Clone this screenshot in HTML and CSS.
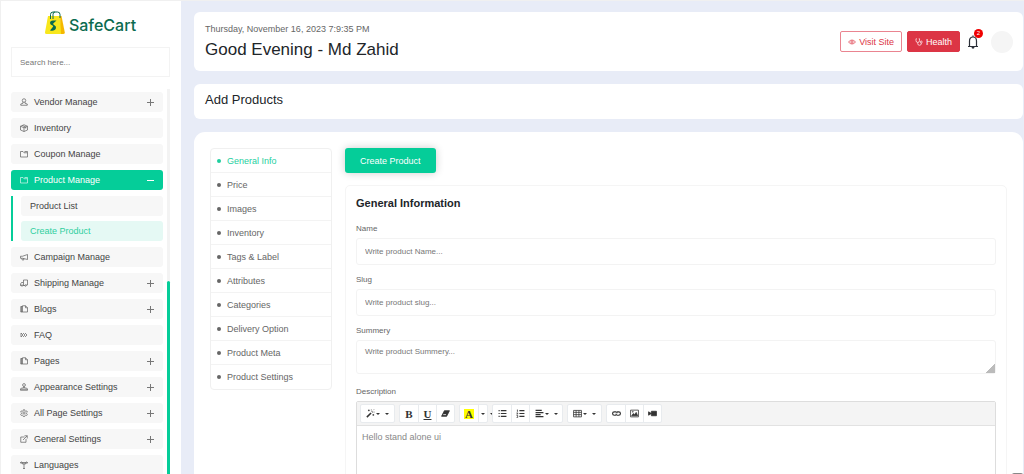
FILE: index.html
```html
<!DOCTYPE html>
<html lang="en">
<head>
  <meta charset="UTF-8">
  <meta name="viewport" content="width=device-width, initial-scale=1.0">
  <title>Add Products - SafeCart</title>
  <link rel="stylesheet" href="styles.css">
</head>
<body>

  <!-- icon set -->
  <svg class="sprite" aria-hidden="true">
    <symbol id="i-user" viewBox="0 0 16 16"><circle cx="8" cy="5" r="3.5"/><path d="M6 8v2.500L1.500 12v2.500h13V12L10 10.500V8"/></symbol>
    <symbol id="i-box" viewBox="0 0 16 16"><path d="M1 4.500 8 1.500l7 3v7.500l-7 3-7-3zM1 4.500l7 3 7-3M8 7.500V15M4.500 3l7 3v3"/></symbol>
    <symbol id="i-folder" viewBox="0 0 16 16"><path d="M1 3h5l2 2.500h7V14H1zM9 3h6v2.500"/></symbol>
    <symbol id="i-horn" viewBox="0 0 16 16"><path d="M1 6.500h4L15 3v10L5 10.500H1zM3.500 10.500l1 3.500h3v-3"/></symbol>
    <symbol id="i-ship" viewBox="0 0 16 16"><path d="M7 2h8v10h-3M7 2v5H3l-2 3v3h2M7 7v6M5.500 13H10"/><circle cx="4" cy="13" r="1.500"/><circle cx="11" cy="13" r="1.500"/></symbol>
    <symbol id="i-copy" viewBox="0 0 16 16"><path d="M5 1.500h6l4 4V14H5zM11 1.500v4h4M5 3H1.500v11H5M3 3v11"/></symbol>
    <symbol id="i-faq" viewBox="0 0 16 16"><path d="m2 4 4 4-4 4M6 4l4 4-4 4M10 4l4 4-4 4M2 4v8"/></symbol>
    <symbol id="i-stamp" viewBox="0 0 16 16"><circle cx="8" cy="4" r="2.800"/><path d="M7 7v3H3l-2 2v2.500h14V12l-2-2H9V7M1.500 12.500h13"/></symbol>
    <symbol id="i-cog" viewBox="0 0 16 16"><circle cx="8" cy="8" r="2.300"/><path d="m6.700 1.500-.4 2-1.700 1-2-.7-1.300 2.400 1.500 1.400v1.800L1.300 10.800l1.300 2.100 2-.6 1.700 1 .4 1.700h2.600l.4-1.700 1.700-1 2 .6 1.300-2.100-1.500-1.400V7.600l1.500-1.400-1.300-2.400-2 .7-1.700-1-.4-2z"/></symbol>
    <symbol id="i-share" viewBox="0 0 16 16"><path d="M9 4H1.500v10.500H12V8M9 1.500h5.500V7M14.500 1.500 6 10"/></symbol>
    <symbol id="i-lang" viewBox="0 0 16 16"><path d="M8 4v11M6 15h4M1 3h14M3 1 1 3l2 3M13 1l2 2-2 3M5 3v3h6V3"/></symbol>
    <symbol id="i-eye" viewBox="0 0 16 16"><path d="M1 8q7-8 14 0-7 8-14 0z"/><circle cx="8" cy="8" r="2.300"/></symbol>
    <symbol id="i-health" viewBox="0 0 16 16"><path d="M3.500 1.500H2V5q0 4 3.500 4T9 5V1.500H7.500M5.500 9v2.500q0 3 3.500 3t3.500-3V10"/><circle cx="12.500" cy="8" r="2"/></symbol>
    <symbol id="i-wand" viewBox="0 0 16 16"><path d="M1.500 14.500 9 7" stroke-width="2.800"/><path d="M10.500 5.500l1-1" stroke-width="2.800"/><path d="M5 1v3M3.500 2.500h3M13 9v3M11.500 10.500h3M14 1l-1 1M9.500 1v1.500M15 5.500h-1.500"/></symbol>
    <symbol id="i-eraser" viewBox="0 0 16 16"><path d="M6 3h9l-5 10H1z" fill="currentColor"/><path d="M4 10h5" stroke="#fff"/></symbol>
    <symbol id="i-ul" viewBox="0 0 16 16"><path d="M1 3h2M1 8h2M1 13h2M5 3h10M5 8h10M5 13h10" stroke-width="2.200"/></symbol>
    <symbol id="i-ol" viewBox="0 0 16 16"><path d="M2.500 1v4M1 7h2v2H1M1 11.500h2V15H1"/><path d="M6 3h9M6 8h9M6 13h9" stroke-width="2.200"/></symbol>
    <symbol id="i-align" viewBox="0 0 16 16"><path d="M1 2.500h11M1 6.500h14M1 10h9M1 13.500h14" stroke-width="2"/></symbol>
    <symbol id="i-table" viewBox="0 0 16 16"><path d="M1 2.500h14v11.500H1zM1 6h14M1 10h14M5.500 2.500V14M10.500 2.500V14"/></symbol>
    <symbol id="i-link" viewBox="0 0 16 16"><path d="M7 11H4a3 3 0 0 1 0-6h3a2.500 2.500 0 0 1 2 2.500M9 5h3a3 3 0 0 1 0 6H9a2.500 2.500 0 0 1-2-2.500" stroke-width="2"/></symbol>
    <symbol id="i-image" viewBox="0 0 16 16"><path d="M1 2h14v12H1z"/><path d="m3 12 3-4 2 2 3-4 2.500 6z" fill="currentColor"/><circle cx="5" cy="5" r=".8"/></symbol>
    <symbol id="i-video" viewBox="0 0 16 16"><path d="M6 4h9v8H6zM1 5l5 3-5 3z" fill="currentColor"/></symbol>
  </svg>

  <div class="layout">
    <aside class="sidebar">
      <a class="logo" href="#">
        <svg viewBox="0 0 20 24" aria-hidden="true">
          <path d="M3 5h12l2 17q0 1-1 1H1.500Q0 23 0 21.500z" fill="#f8e71c"/>
          <path d="M15 5h1.500l3.300 16.500Q20 23 18 23h-2z" fill="#f5b800"/>
          <path d="M5.500 8V3.500Q5.500 1 8 1h4.500Q15 1 15 3.500V7M8 8V3.500Q8 1 10 1" fill="none" stroke="#0b6b4f"/>
          <path d="M11.500 9.500H8q-3 0-3 2.500 0 1.500 2.500 2.500 1 .5.500 1.200L5 19.500q5 1 6-2.500.5-2-2.200-3.200-1.300-.6-.3-1.500z" fill="#0b6b4f"/>
        </svg>
        <span>SafeCart</span>
      </a>

      <input class="search" type="text" placeholder="Search here..." aria-label="Search menu">

      <div class="menu-wrap">
        <ul class="menu">
          <li><a class="menu-item" href="#"><svg class="icon"><use href="#i-user"/></svg>Vendor Manage<span class="plus"></span></a></li>
          <li><a class="menu-item" href="#"><svg class="icon"><use href="#i-box"/></svg>Inventory</a></li>
          <li><a class="menu-item" href="#"><svg class="icon"><use href="#i-folder"/></svg>Coupon Manage</a></li>
          <li>
            <a class="menu-item active" href="#"><svg class="icon"><use href="#i-folder"/></svg>Product Manage<span class="plus minus"></span></a>
            <ul class="submenu">
              <li><a class="menu-item" href="#">Product List</a></li>
              <li><a class="menu-item selected" href="#">Create Product</a></li>
            </ul>
          </li>
          <li><a class="menu-item" href="#"><svg class="icon"><use href="#i-horn"/></svg>Campaign Manage</a></li>
          <li><a class="menu-item" href="#"><svg class="icon"><use href="#i-ship"/></svg>Shipping Manage<span class="plus"></span></a></li>
          <li><a class="menu-item" href="#"><svg class="icon"><use href="#i-copy"/></svg>Blogs<span class="plus"></span></a></li>
          <li><a class="menu-item" href="#"><svg class="icon"><use href="#i-faq"/></svg>FAQ</a></li>
          <li><a class="menu-item" href="#"><svg class="icon"><use href="#i-copy"/></svg>Pages<span class="plus"></span></a></li>
          <li><a class="menu-item" href="#"><svg class="icon"><use href="#i-stamp"/></svg>Appearance Settings<span class="plus"></span></a></li>
          <li><a class="menu-item" href="#"><svg class="icon"><use href="#i-cog"/></svg>All Page Settings<span class="plus"></span></a></li>
          <li><a class="menu-item" href="#"><svg class="icon"><use href="#i-share"/></svg>General Settings<span class="plus"></span></a></li>
          <li><a class="menu-item" href="#"><svg class="icon"><use href="#i-lang"/></svg>Languages</a></li>
        </ul>
        <div class="scroll-track"><div class="scroll-thumb"></div></div>
      </div>
    </aside>

    <main class="main">
      <header class="card topbar">
        <div>
          <p class="date">Thursday, November 16, 2023 7:9:35 PM</p>
          <h1>Good Evening - Md Zahid</h1>
        </div>
        <div class="top-actions">
          <a class="btn btn-outline" href="#"><svg class="icon"><use href="#i-eye"/></svg>Visit Site</a>
          <a class="btn btn-danger" href="#"><svg class="icon"><use href="#i-health"/></svg>Health</a>
          <button class="bell" type="button" aria-label="Notifications">
            <svg viewBox="0 0 12 14" aria-hidden="true"><path d="M1 11.500h10M2.500 11V6q0-4 3.500-4t3.500 4v5M6 .5V2" fill="none" stroke="#2b2f38" stroke-width="1.200"/><path d="M4.500 12h3q0 1.700-1.500 1.700T4.500 12z" fill="#2b2f38"/></svg>
            <span class="badge">2</span>
          </button>
          <span class="avatar"></span>
        </div>
      </header>

      <section class="card page-title">
        <h2>Add Products</h2>
      </section>

      <section class="card product">
        <nav class="tabs">
          <a class="active" href="#">General Info</a>
          <a href="#">Price</a>
          <a href="#">Images</a>
          <a href="#">Inventory</a>
          <a href="#">Tags &amp; Label</a>
          <a href="#">Attributes</a>
          <a href="#">Categories</a>
          <a href="#">Delivery Option</a>
          <a href="#">Product Meta</a>
          <a href="#">Product Settings</a>
        </nav>

        <form class="product-form">
          <button class="create-btn" type="submit">Create Product</button>

          <div class="form-card">
            <h3>General Information</h3>
            <div class="field">
              <label for="name">Name</label>
              <input id="name" type="text" placeholder="Write product Name...">
            </div>
            <div class="field">
              <label for="slug">Slug</label>
              <input id="slug" type="text" placeholder="Write product slug...">
            </div>
            <div class="field">
              <label for="summery">Summery</label>
              <textarea id="summery" placeholder="Write product Summery..."></textarea>
            </div>
            <div class="field">
              <label id="description-label">Description</label>
              <div class="editor">
                <div class="toolbar">
                  <div class="group">
                    <button class="wide" type="button" aria-label="Style"><svg class="icon"><use href="#i-wand"/></svg><i class="caret"></i><i class="caret far"></i></button>
                  </div>
                  <div class="group">
                    <button type="button"><b>B</b></button>
                    <button type="button"><b><u>U</u></b></button>
                    <button type="button" aria-label="Remove style"><svg class="icon"><use href="#i-eraser"/></svg></button>
                  </div>
                  <div class="group">
                    <button type="button"><b class="mark">A</b></button>
                    <button class="narrow" type="button" aria-label="More colors"><i class="caret"></i><i class="caret far"></i></button>
                  </div>
                  <div class="group">
                    <button type="button" aria-label="Bullet list"><svg class="icon"><use href="#i-ul"/></svg></button>
                    <button type="button" aria-label="Numbered list"><svg class="icon"><use href="#i-ol"/></svg></button>
                    <button class="wide" type="button" aria-label="Paragraph"><svg class="icon"><use href="#i-align"/></svg><i class="caret"></i><i class="caret far"></i></button>
                  </div>
                  <div class="group">
                    <button class="wide" type="button" aria-label="Table"><svg class="icon"><use href="#i-table"/></svg><i class="caret"></i><i class="caret far"></i></button>
                  </div>
                  <div class="group">
                    <button type="button" aria-label="Link"><svg class="icon"><use href="#i-link"/></svg></button>
                    <button type="button" aria-label="Picture"><svg class="icon"><use href="#i-image"/></svg></button>
                    <button type="button" aria-label="Video"><svg class="icon"><use href="#i-video"/></svg></button>
                  </div>
                </div>
                <div class="editor-body" contenteditable="true" role="textbox" aria-labelledby="description-label">Hello stand alone ui</div>
              </div>
            </div>
          </div>
        </form>
      </section>
    </main>
  </div>

  <button class="to-top" type="button" aria-label="Back to top"></button>

</body>
</html>
```
FILE: styles.css
```css
* {
    box-sizing: border-box;
}

body {
    margin: 0;
    font-family: "Liberation Sans", Arial, sans-serif;
    font-size: 9px;
    line-height: 12px;
    color: #666;
    background-color: #e8ecf7;
}

h1, h2, h3, p, ul {
    margin: 0;
    padding: 0;
}

ul {
    list-style: none;
}

a {
    color: inherit;
    text-decoration: none;
}

button, input, textarea {
    font-family: inherit;
    font-size: inherit;
    color: inherit;
}

.sprite {
    display: none;
}

.icon {
    width: 8px;
    height: 8px;
    flex: none;
    fill: none;
    stroke: currentColor;
    stroke-width: 1.4;
}

.layout {
    display: flex;
    height: 100vh;
    overflow: hidden;
    border-top: 1px solid #f0f0f0;
}

/* Sidebar */
.sidebar {
    width: 181px;
    flex: none;
    display: flex;
    flex-direction: column;
    padding: 10px 11px 0 10px;
    background-color: #fff;
    border-left: 1px solid #f0f0f0;
}

.logo {
    display: flex;
    justify-content: center;
    align-items: center;
    gap: 4px;
    height: 24px;
    font-family: Inter, sans-serif;
    font-size: 16px;
    font-weight: 500;
    color: #0b6b4f;
}

.logo span {
    padding-top: 4px;
}

.logo svg {
    width: 20px;
    height: 24px;
}

.search {
    width: 100%;
    height: 30px;
    margin: 12px 0;
    padding: 0 8px;
    flex: none;
    border: 1px solid #f3f3f3;
    font-size: 8px;
    outline: none;
}

::placeholder {
    color: #777;
    opacity: 1;
}

.menu-wrap {
    display: flex;
    gap: 4px;
    flex: 1;
    min-height: 0;
}

.menu {
    flex: 1;
    display: flex;
    flex-direction: column;
    gap: 6px;
    padding-top: 3px;
}

.menu-item {
    display: flex;
    align-items: center;
    gap: 6px;
    height: 20px;
    padding: 0 8px 0 9px;
    border-radius: 3px;
    background-color: #f7f7f7;
    color: #444;
}

.menu-item .icon {
    opacity: 0.85;
}

.menu-item.active {
    background-color: #05cd99;
    color: #fff;
}

.menu-item.selected {
    background-color: #e5f9f4;
    color: #2fcf9f;
}

.submenu {
    display: flex;
    flex-direction: column;
    gap: 5px;
    margin-top: 6px;
    padding-left: 8px;
    border-left: 2px solid #05cd99;
}

.plus {
    width: 9px;
    height: 9px;
    margin-left: auto;
    background:
        linear-gradient(#777, #777) center / 7px 1px no-repeat,
        linear-gradient(#777, #777) center / 1px 7px no-repeat;
}

.plus.minus {
    background: linear-gradient(#fff, #fff) center / 7px 1px no-repeat;
}

.scroll-track {
    width: 3px;
    background-color: #f3f3f3;
}

.scroll-thumb {
    height: 100%;
    margin-top: 192px;
    border-radius: 3px 3px 0 0;
    background-color: #05cd99;
}

/* Main area */
.main {
    flex: 1;
    min-width: 0;
    display: flex;
    flex-direction: column;
    gap: 13px;
    padding: 11px 1px 0 13px;
}

.card {
    flex: none;
    background-color: #fff;
    border-radius: 6px;
    padding: 0 11px;
}

.topbar {
    display: flex;
    justify-content: space-between;
    align-items: center;
    height: 59px;
    padding-right: 10px;
}

.topbar h1 {
    margin-top: 5px;
    font-size: 17px;
    font-weight: 400;
    line-height: 20px;
    color: #212529;
}

.top-actions {
    display: flex;
    align-items: center;
    gap: 5px;
}

.btn {
    display: flex;
    align-items: center;
    gap: 3px;
    height: 21px;
    padding: 0 7px;
    border: 1px solid #dc3545;
    border-radius: 2px;
}

.btn-outline {
    border-color: #ea8490;
    color: #dc3545;
}

.btn-danger {
    background-color: #dc3545;
    color: #fff;
}

.bell {
    position: relative;
    display: flex;
    margin: 0 7px 0 2px;
    padding: 0;
    border: 0;
    background: none;
}

.bell svg {
    width: 12px;
    height: 14px;
}

.badge {
    position: absolute;
    top: -6px;
    right: -4px;
    width: 9px;
    height: 9px;
    border-radius: 50%;
    background-color: #f00000;
    color: #fff;
    font-size: 6px;
    line-height: 9px;
    text-align: center;
}

.avatar {
    width: 22px;
    height: 22px;
    border-radius: 50%;
    background-color: #f5f5f5;
}

.page-title {
    display: flex;
    align-items: center;
    height: 35px;
    padding-bottom: 4px;
}

.page-title h2 {
    font-size: 13px;
    font-weight: 400;
    line-height: 16px;
    color: #212529;
}

.product {
    display: flex;
    align-items: flex-start;
    gap: 13px;
    padding: 16px;
    border-radius: 11px;
}

.tabs {
    width: 122px;
    flex: none;
    border: 1px solid #f0f0f0;
    border-radius: 4px;
}

.tabs a {
    display: flex;
    align-items: center;
    gap: 6px;
    height: 24px;
    padding-left: 6px;
    border-bottom: 1px solid #f3f3f3;
}

.tabs a:last-child {
    border-bottom: 0;
}

.tabs a::before {
    content: "";
    width: 4px;
    height: 4px;
    border-radius: 50%;
    background-color: currentColor;
}

.tabs a.active {
    color: #1fcf9f;
}

.product-form {
    flex: 1;
    min-width: 0;
}

.create-btn {
    display: block;
    height: 25px;
    margin-bottom: 12px;
    padding: 0 15px;
    border: 0;
    border-radius: 3px;
    background-color: #05cd99;
    color: #fff;
    box-shadow: 0 0 8px rgba(0, 0, 0, 0.2);
}

.form-card {
    padding: 10px;
    border: 1px solid #f5f5f5;
    border-radius: 5px;
}

.form-card h3 {
    margin-bottom: 13px;
    font-size: 11px;
    line-height: 14px;
    color: #212529;
}

.field {
    margin-bottom: 9px;
    font-size: 8px;
}

.field label {
    display: block;
    margin-bottom: 3px;
}

.field input, .field textarea {
    display: block;
    width: 100%;
    height: 27px;
    padding: 0 8px;
    border: 1px solid #f3f3f3;
    border-radius: 3px;
    outline: none;
}

.field textarea {
    height: 34px;
    margin-bottom: 12px;
    padding-top: 6px;
    resize: vertical;
}

.field textarea::-webkit-resizer {
    background: linear-gradient(135deg, transparent 70%, #bbb 70%);
}

/* Text editor */
.editor {
    border: 1px solid #ddd;
    border-radius: 2px;
}

.toolbar {
    display: flex;
    gap: 4px;
    padding: 2px 3px;
    background-color: #f4f4f4;
    border-bottom: 1px solid #e2e2e2;
}

.group {
    position: relative;
    display: flex;
    background-color: #fff;
    border: 1px solid #e8ebee;
    border-radius: 2px;
}

.group button {
    display: flex;
    justify-content: center;
    align-items: center;
    width: 18px;
    height: 17px;
    padding: 0;
    border: 0;
    background: none;
    color: #333;
    font-family: "Liberation Serif", serif;
    font-size: 11px;
}

.group button + button {
    border-left: 1px solid #e8ebee;
}

.group button.wide {
    width: 33px;
}

.group button.narrow {
    width: 9px;
    justify-content: flex-start;
    padding-left: 1px;
}

.group .icon {
    width: 9px;
    height: 9px;
}

.mark {
    padding: 0 1px;
    line-height: 10px;
    background-color: #ff0;
}

.caret {
    flex: none;
    margin-left: 1px;
    border: 2px solid transparent;
    border-top-color: #333;
    border-bottom: 0;
}

.caret.far {
    margin-left: 5px;
}

.editor-body {
    min-height: 90px;
    padding: 5px;
    font-size: 9px;
    color: #888;
    outline: none;
}

.to-top {
    position: fixed;
    right: 1px;
    bottom: -20px;
    width: 11px;
    height: 21px;
    padding: 0;
    border: 0;
    border-radius: 2px;
    background-color: #888;
}
```
